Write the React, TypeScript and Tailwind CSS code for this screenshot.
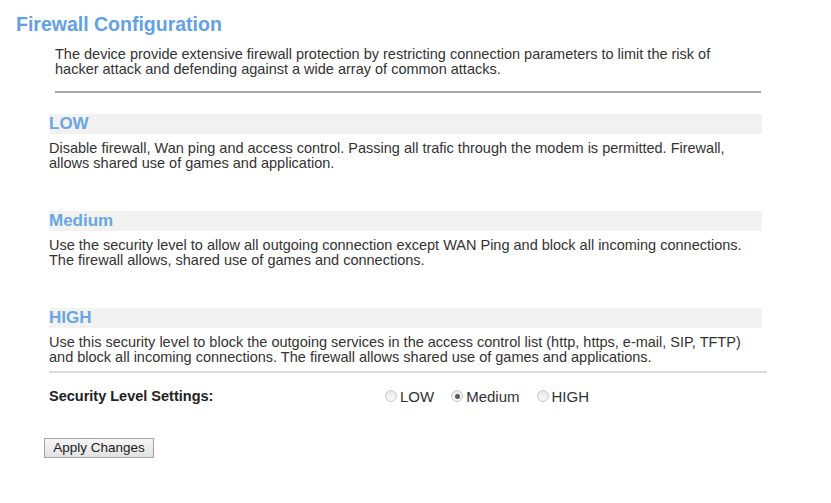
import React from "react";

type Level = { name: string; lines: string[] };

const levels: Level[] = [
  {
    name: "LOW",
    lines: [
      "Disable firewall, Wan ping and access control. Passing all trafic through the modem is permitted. Firewall,",
      "allows shared use of games and application.",
    ],
  },
  {
    name: "Medium",
    lines: [
      "Use the security level to allow all outgoing connection except WAN Ping and block all incoming connections.",
      "The firewall allows, shared use of games and connections.",
    ],
  },
  {
    name: "HIGH",
    lines: [
      "Use this security level to block the outgoing services in the access control list (http, https, e-mail, SIP, TFTP)",
      "and block all incoming connections. The firewall allows shared use of games and applications.",
    ],
  },
];

function Radio({ label, checked }: { label: string; checked?: boolean }) {
  return (
    <label className="flex items-center gap-[3px]">
      <span className="w-[12px] h-[12px] rounded-full border border-[#c8c8c8] bg-gradient-to-b from-[#e8e8e8] to-[#f9f9f9] flex items-center justify-center">
        {checked && <span className="w-[5px] h-[5px] rounded-full bg-[#5a5a5a]" />}
      </span>
      <span className="text-[15px] leading-[17px] text-[#333]">{label}</span>
    </label>
  );
}

export default function App() {
  return (
    <div className="w-[831px] h-[503px] bg-white font-['Liberation_Sans',Arial,sans-serif] text-[#333] overflow-hidden">
      <h1 className="pl-4 pt-[13px] text-[19.5px] leading-[22px] font-bold text-[#62a1e4]">
        Firewall Configuration
      </h1>

      <div className="ml-[55px] w-[706px]">
        <p className="mt-[12px] text-[14.5px] leading-[15px] whitespace-nowrap">
          The device provide extensive firewall protection by restricting connection parameters to limit the risk of
          <br />
          hacker attack and defending against a wide array of common attacks.
        </p>
        <div className="mt-[14px] h-[2px] bg-[#a9a9a9]" />
      </div>

      <div className="ml-[49px] w-[713px] mt-[21px] flex flex-col gap-[40px]">
        {levels.map((lv) => (
          <section key={lv.name}>
            <div className="h-5 bg-[#f2f2f2] text-[17px] leading-5 font-bold text-[#6aa6e5]">{lv.name}</div>
            <p className="mt-[7px] text-[14.5px] leading-[15px] whitespace-nowrap">
              {lv.lines[0]}
              <br />
              {lv.lines[1]}
            </p>
          </section>
        ))}
      </div>

      <div className="ml-[49px] w-[718px] mt-[6px] h-[2px] bg-[#dcdcdc]" />

      <div className="ml-[49px] h-[30px] mt-[8px] flex items-center">
        <span className="w-[336px] text-[14.5px] leading-[17px] font-bold text-[#222]">Security Level Settings:</span>
        <div className="flex items-center gap-[17px]">
          <Radio label="LOW" />
          <Radio label="Medium" checked />
          <Radio label="HIGH" />
        </div>
      </div>

      <button className="ml-[44px] mt-[27px] w-[110px] h-[20px] border border-[#a5a5a5] bg-gradient-to-b from-[#f6f6f6] to-[#e2e2e2] text-[13.5px] leading-[18px] text-[#222]">
        Apply Changes
      </button>
    </div>
  );
}
